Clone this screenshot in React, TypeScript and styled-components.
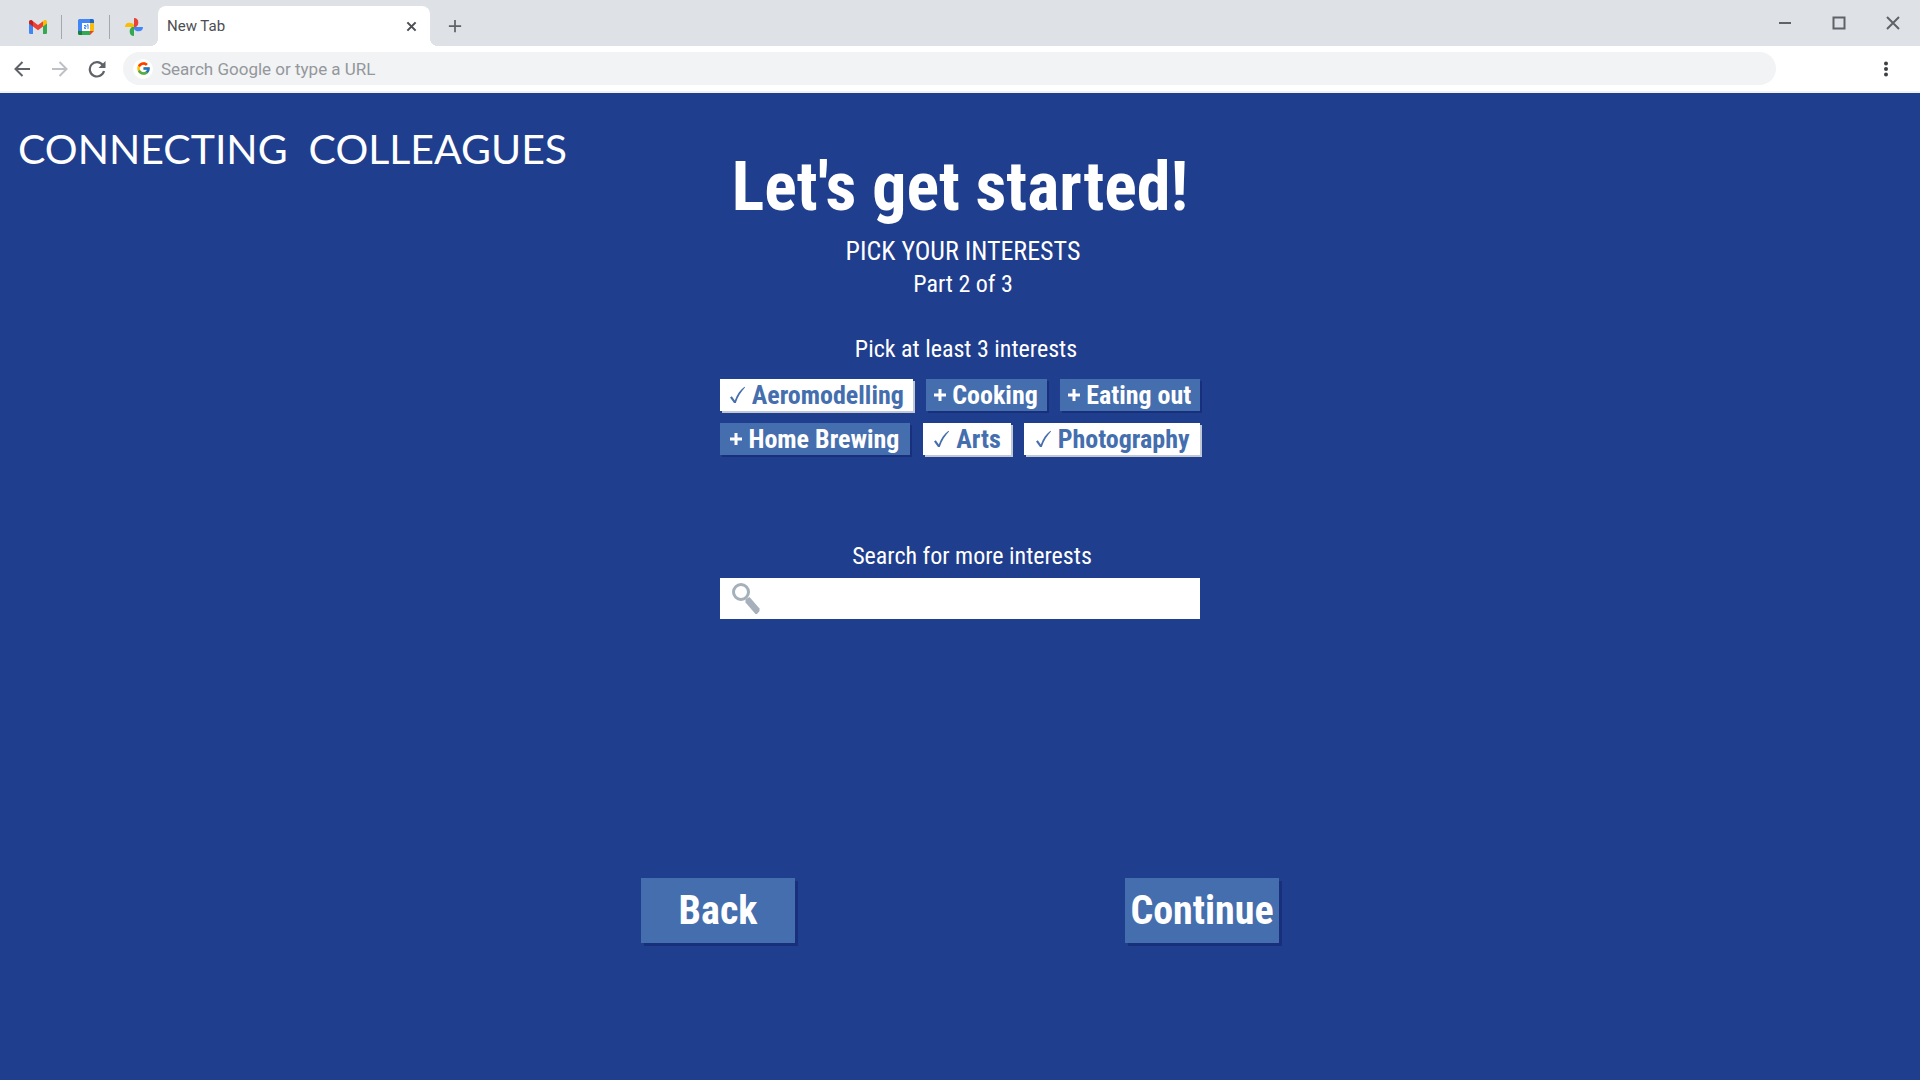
import React, { useState } from "react";
import styled, { createGlobalStyle } from "styled-components";
import { FcGoogle } from "react-icons/fc";

const GlobalStyle = createGlobalStyle`
  *, *::before, *::after { box-sizing: border-box; }
  html, body, #root { height: 100%; }
  body { margin: 0; background: #1f3e8d; }
  button, input { font: inherit; color: inherit; border: 0; border-radius: 0; margin: 0; padding: 0; }
  button { background: none; cursor: pointer; }
  svg { display: block; flex: none; }
`;

const narrow = `"Liberation Sans Narrow", "Arial Narrow", "Roboto Condensed", "Liberation Sans", Arial, sans-serif`;

const Page = styled.div`
  min-height: 100%;
  display: flex;
  flex-direction: column;
  color: #fff;
  font-family: ${narrow};
`;

const Browser = styled.header`
  font-family: Roboto, sans-serif;
  background: #fff;
  border-bottom: 2px solid #f1f1f2;
`;

const TabStrip = styled.div`
  display: flex;
  align-items: flex-end;
  height: 46px;
  background: #dee1e6;
  padding-left: 14px;
`;

const PinnedTab = styled.button<{ $divided?: boolean }>`
  display: grid;
  place-items: center;
  width: 48px;
  height: 24px;
  margin-bottom: 7px;
  border-right: ${(p) => (p.$divided ? "1px solid #a6a8ab" : "0")};
`;

const Tab = styled.div`
  position: relative;
  display: flex;
  align-items: center;
  justify-content: space-between;
  width: 272px;
  height: 40px;
  padding: 0 13px 0 9px;
  border-radius: 8px 8px 0 0;
  background: #fff;
  color: #4b4e52;
  font-size: 15px;
  &::before, &::after {
    content: "";
    position: absolute;
    bottom: 0;
    width: 8px;
    height: 8px;
  }
  &::before { left: -8px; background: radial-gradient(circle at 0 0, transparent 8px, #fff 8px); }
  &::after { right: -8px; background: radial-gradient(circle at 100% 0, transparent 8px, #fff 8px); }
`;

const IconButton = styled.button<{ $width: number; $color?: string }>`
  display: grid;
  place-items: center;
  width: ${(p) => p.$width}px;
  height: 40px;
  color: ${(p) => p.$color || "#5f6368"};
`;

const WindowControls = styled.div`
  display: flex;
  align-self: flex-start;
  margin-left: auto;
  padding-top: 3px;
`;

const Toolbar = styled.div`
  display: flex;
  align-items: center;
  height: 45px;
  padding: 0 16px 0 4px;
`;

const Omnibox = styled.label`
  flex: 1;
  display: flex;
  align-items: center;
  gap: 8px;
  height: 33px;
  margin: 0 92px 0 8px;
  padding-left: 10px;
  border-radius: 17px;
  background: #f1f3f4;
`;

const GoogleBadge = styled.span`
  display: grid;
  place-items: center;
  width: 20px;
  height: 20px;
  border-radius: 50%;
  background: #fff;
`;

const UrlInput = styled.input`
  flex: 1;
  background: transparent;
  outline: 0;
  font-size: 17px;
  line-height: 20px;
  color: #4b4e52;
  &::placeholder { color: #94979c; opacity: 1; }
`;

const Body = styled.div`
  flex: 1;
  display: grid;
  grid-template-columns: 1fr 638px 1fr;
`;

const Brand = styled.div`
  padding: 32px 0 0 18px;
  font-family: Lato, sans-serif;
  font-size: 41px;
  line-height: 48px;
  white-space: pre;
`;

const Content = styled.main`
  display: flex;
  flex-direction: column;
  align-items: center;
  padding-top: 54px;
`;

const Title = styled.h1`
  margin: 0 0 8px;
  font-size: 68px;
  line-height: 80px;
  font-weight: 700;
  white-space: nowrap;
`;

const Line = styled.p<{ $indent: number; $large?: boolean }>`
  margin: 0;
  padding-left: ${(p) => p.$indent}px;
  font-size: ${(p) => (p.$large ? 26 : 24)}px;
  line-height: 33px;
  text-align: center;
`;

const Section = styled.section`
  width: 480px;
  margin-top: 32px;
`;

const Chips = styled.div`
  display: flex;
  flex-direction: column;
  gap: 12px;
  margin-top: 13px;
`;

const ChipRow = styled.div`
  display: flex;
  gap: 13px;
`;

const Chip = styled.button`
  flex: 1 0 auto;
  display: flex;
  align-items: center;
  justify-content: center;
  gap: 6px;
  height: 32px;
  padding: 0 8px;
  font-size: 26px;
  line-height: 32px;
  font-weight: 700;
  white-space: nowrap;
  color: #fff;
  background: #456eae;
  box-shadow: 2px 2px 0 #182f7b;
  &[aria-pressed="true"] {
    color: #456eae;
    background: #fff;
    box-shadow: 2px 2px 0 #c0c8d6;
  }
`;

const SearchSection = styled(Section)`
  margin-top: 85px;
`;

const SearchLabel = styled.label`
  display: block;
  padding-left: 24px;
  font-size: 24px;
  line-height: 33px;
  text-align: center;
`;

const SearchBox = styled.div`
  display: flex;
  align-items: center;
  height: 41px;
  margin-top: 5px;
  padding: 0 12px;
  background: #fff;
`;

const SearchInput = styled.input`
  flex: 1;
  margin-left: 12px;
  font-size: 24px;
  color: #1f3e8d;
  background: transparent;
  outline: 0;
`;

const Actions = styled.div`
  align-self: stretch;
  display: flex;
  justify-content: space-between;
  margin-top: 259px;
`;

const ActionButton = styled.button`
  width: 154px;
  height: 65px;
  font-size: 40px;
  line-height: 65px;
  font-weight: 700;
  text-align: center;
  background: #456eae;
  box-shadow: 3px 3px 0 #182f7b;
`;

const GmailIcon = () => (
  <svg width="18" height="14" viewBox="0 0 18 14">
    <path d="M0 2v10.700a1.300 1.300 0 0 0 1.300 1.300H4V5z" fill="#4285f4" />
    <path d="M18 2v10.700a1.300 1.300 0 0 1-1.300 1.300H14V5z" fill="#34a853" />
    <path d="M0 2C0 .3 1.800-.5 3.200.6L4 1.200V6.500L0 3.500z" fill="#c5221f" />
    <path d="M18 2c0-1.700-1.800-2.500-3.200-1.400l-.8.6V6.500l4-3z" fill="#fbbc04" />
    <path d="M4 1.200 9 5l5-3.800v5.300L9 10.300 4 6.500z" fill="#ea4335" />
  </svg>
);

const CalendarIcon = () => (
  <svg width="16" height="16" viewBox="0 0 16 16">
    <path d="M1.500 0H12v4H4v8H0V1.500A1.500 1.500 0 0 1 1.500 0z" fill="#4285f4" />
    <path d="M12 0h2.500A1.500 1.500 0 0 1 16 1.500V4h-4z" fill="#1967d2" />
    <path d="M12 4h4v8h-4z" fill="#fbbc04" />
    <path d="M4 12h8v4H4z" fill="#34a853" />
    <path d="M0 12h4v4H1.500A1.500 1.500 0 0 1 0 14.500z" fill="#188038" />
    <path d="M12 12h4l-4 4z" fill="#ea4335" />
    <path d="M4 4h8v8H4z" fill="#fff" />
    <path d="M6 6.500h2V8H6.500v1.500H8M9 6l1-.5V10" fill="none" stroke="#4285f4" strokeWidth="1" />
  </svg>
);

const PhotosIcon = () => (
  <svg width="18" height="18" viewBox="0 0 18 18">
    <path d="M9 9V0a4.500 4.500 0 0 1 4.300 4.500c0 2-.8 3.500-2.300 4.500z" fill="#ea4335" />
    <path d="M9 9h9a4.500 4.500 0 0 1-4.500 4.300c-2 0-3.500-.8-4.500-2.300z" fill="#4285f4" />
    <path d="M9 9v9a4.500 4.500 0 0 1-4.300-4.500c0-2 .8-3.500 2.300-4.500z" fill="#34a853" />
    <path d="M9 9H0a4.500 4.500 0 0 1 4.500-4.300c2 0 3.500.8 4.500 2.300z" fill="#fbbc04" />
  </svg>
);

const Stroke = ({ d, size = 16, width = 2 }: { d: string; size?: number; width?: number }) => (
  <svg width={size} height={size} viewBox="0 0 16 16" fill="none" stroke="currentColor" strokeWidth={width}>
    <path d={d} />
  </svg>
);

const ReloadIcon = () => (
  <svg width="18" height="18" viewBox="0 0 18 18">
    <path d="M14.800 5A7.200 7.200 0 1 0 16 11" fill="none" stroke="currentColor" strokeWidth="2.200" />
    <path d="M17.500 1v7h-7z" fill="currentColor" />
  </svg>
);

const MenuIcon = () => (
  <svg width="6" height="16" viewBox="0 0 6 16" fill="#3c4043">
    <circle cx="3" cy="2.500" r="2" />
    <circle cx="3" cy="8" r="2" />
    <circle cx="3" cy="13.500" r="2" />
  </svg>
);

const CheckIcon = () => (
  <svg width="17" height="18" viewBox="0 0 17 18">
    <path d="M1 11.500 2.800 10.300 5.800 14.500C8 8.500 11 4 15.500.8L16 1.600C12.200 5.500 9 10.500 6.800 17H5z" fill="currentColor" />
  </svg>
);

const PlusIcon = () => (
  <svg width="12" height="14" viewBox="0 0 12 14">
    <path d="M6 1v12M0 7h12" stroke="currentColor" strokeWidth="3" />
  </svg>
);

const MagnifierIcon = () => (
  <svg width="28" height="32" viewBox="0 0 28 32">
    <circle cx="9" cy="9" r="7.500" fill="none" stroke="#a5b0ba" strokeWidth="3" />
    <path d="M13.500 16.500 17.500 14 27.500 25.500V28L25 31h-1.500L13.500 19.500z" fill="#a5b0ba" />
  </svg>
);

const rows = [
  ["Aeromodelling", "Cooking", "Eating out"],
  ["Home Brewing", "Arts", "Photography"],
];

export default function App() {
  const [picked, setPicked] = useState(["Aeromodelling", "Arts", "Photography"]);
  const toggle = (name: string) =>
    setPicked((list) => (list.includes(name) ? list.filter((n) => n !== name) : [...list, name]));

  return (
    <Page>
      <GlobalStyle />
      <Browser>
        <TabStrip>
          <PinnedTab $divided aria-label="Gmail"><GmailIcon /></PinnedTab>
          <PinnedTab $divided aria-label="Calendar"><CalendarIcon /></PinnedTab>
          <PinnedTab aria-label="Photos"><PhotosIcon /></PinnedTab>
          <Tab>
            <span>New Tab</span>
            <button aria-label="Close tab"><Stroke d="M2 2l12 12M14 2L2 14" size={11} width={3} /></button>
          </Tab>
          <IconButton $width={50} aria-label="New tab"><Stroke d="M8 1v14M1 8h14" size={14} /></IconButton>
          <WindowControls>
            <IconButton $width={54} aria-label="Minimize"><Stroke d="M2 8h12" /></IconButton>
            <IconButton $width={54} aria-label="Maximize"><Stroke d="M2.500 2.500h11v11h-11z" /></IconButton>
            <IconButton $width={54} aria-label="Close"><Stroke d="M2 2l12 12M14 2L2 14" /></IconButton>
          </WindowControls>
        </TabStrip>
        <Toolbar>
          <IconButton $width={36} aria-label="Back one page"><Stroke d="M16 8H1.500M8.500 1L1.500 8l7 7" /></IconButton>
          <IconButton $width={39} $color="#bdc1c6" aria-label="Forward one page" disabled>
            <Stroke d="M0 8h14.500M7.500 1l7 7-7 7" />
          </IconButton>
          <IconButton $width={36} aria-label="Reload"><ReloadIcon /></IconButton>
          <Omnibox>
            <GoogleBadge><FcGoogle size={15} /></GoogleBadge>
            <UrlInput aria-label="Address" placeholder="Search Google or type a URL" />
          </Omnibox>
          <IconButton $width={36} aria-label="Menu"><MenuIcon /></IconButton>
        </Toolbar>
      </Browser>
      <Body>
        <Brand>CONNECTING  COLLEAGUES</Brand>
        <Content>
          <Title>Let's get started!</Title>
          <Line $indent={6} $large>PICK YOUR INTERESTS</Line>
          <Line $indent={6}>Part 2 of 3</Line>
          <Section>
            <Line $indent={12}>Pick at least 3 interests</Line>
            <Chips>
              {rows.map((row) => (
                <ChipRow key={row[0]}>
                  {row.map((name) => {
                    const on = picked.includes(name);
                    return (
                      <Chip key={name} type="button" aria-pressed={on} onClick={() => toggle(name)}>
                        {on ? <CheckIcon /> : <PlusIcon />}
                        {name}
                      </Chip>
                    );
                  })}
                </ChipRow>
              ))}
            </Chips>
          </Section>
          <SearchSection>
            <SearchLabel htmlFor="interest-search">Search for more interests</SearchLabel>
            <SearchBox>
              <MagnifierIcon />
              <SearchInput id="interest-search" type="text" />
            </SearchBox>
          </SearchSection>
          <Actions>
            <ActionButton type="button">Back</ActionButton>
            <ActionButton type="button">Continue</ActionButton>
          </Actions>
        </Content>
      </Body>
    </Page>
  );
}
